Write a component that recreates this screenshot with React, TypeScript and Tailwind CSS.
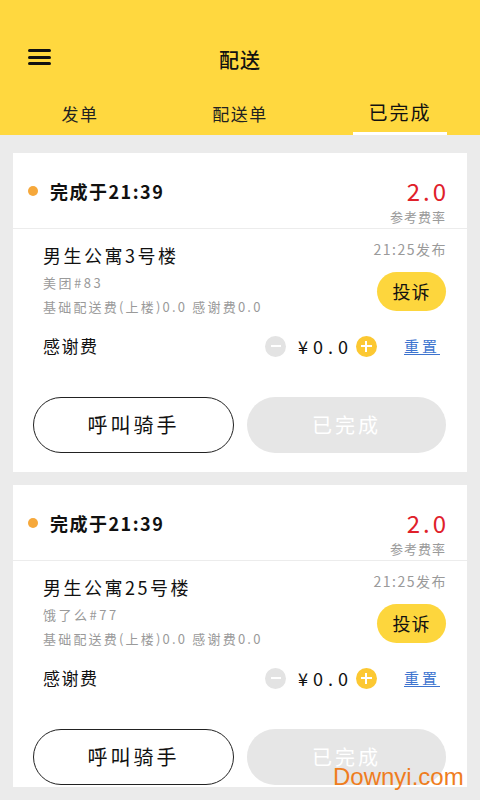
import React from "react";

const cjk = { fontFamily: '"Noto Sans CJK SC", "Noto Sans", sans-serif' };

type Order = { name: string; shop: string };

const orders: Order[] = [
  { name: "男生公寓3号楼", shop: "美团#83" },
  { name: "男生公寓25号楼", shop: "饿了么#77" },
];

const OrderCard: React.FC<{ order: Order }> = ({ order }) => (
  <div className="bg-white mx-[13px] mb-[13px]">
    <div className="h-[76px] pt-[24px] pl-[15px] pr-[21px] flex justify-between items-start border-b border-[#ececec]">
      <div className="flex items-center h-[28px] gap-[12px]">
        <span className="w-[10px] h-[10px] rounded-full bg-[#f6a83b]" />
        <span className="text-[18px] font-bold text-[#111] tracking-[1.5px]">完成于21:39</span>
      </div>
      <div className="flex flex-col items-end">
        <span className="text-[24px] leading-[28px] tracking-[3px] text-[#e0202a] mr-[-3px]">2.0</span>
        <span className="text-[13px] leading-[16px] mt-[4px] text-[#9a9a9a] tracking-[1px]">参考费率</span>
      </div>
    </div>

    <div className="pl-[30px] pr-[21px] flex justify-between">
      <div className="pt-[13px] flex flex-col">
        <span className="text-[18px] leading-[26px] text-[#111] tracking-[2.5px]">{order.name}</span>
        <span className="text-[13px] leading-[20px] mt-[5px] text-[#9a9a9a] tracking-[2.5px]">{order.shop}</span>
        <span className="text-[13px] leading-[20px] mt-[4px] text-[#9a9a9a] tracking-[2.2px] whitespace-nowrap">
          基础配送费(上楼)0.0 感谢费0.0
        </span>
      </div>
      <div className="pt-[10px] flex flex-col items-end">
        <span className="text-[14px] leading-[20px] text-[#9a9a9a] tracking-[1.5px] mr-[-1px]">21:25发布</span>
        <button className="mt-[13px] w-[69px] h-[39px] rounded-full bg-[#fdd63d] text-[18px] text-[#111] tracking-[1px]">
          投诉
        </button>
      </div>
    </div>

    <div className="mt-[17px] pl-[30px] pr-[27px] h-[24px] flex items-center justify-between">
      <span className="text-[17px] text-[#111] tracking-[1.5px]">感谢费</span>
      <div className="flex items-center">
        <span className="w-[21px] h-[21px] rounded-full bg-[#e3e3e3] flex items-center justify-center">
          <span className="w-[10px] h-[2px] bg-white" />
        </span>
        <span className="ml-[12px] text-[18px] text-[#111] tracking-[5px] mr-[-5px]">¥0.0</span>
        <span className="ml-[8px] w-[21px] h-[21px] rounded-full bg-[#fcc832] flex items-center justify-center relative">
          <span className="w-[11px] h-[2px] bg-white" />
          <span className="absolute w-[2px] h-[11px] bg-white" />
        </span>
        <span className="ml-[27px] text-[15px] text-[#3d74cf] underline underline-offset-2 tracking-[3px]">重置</span>
      </div>
    </div>

    <div className="mt-[39px] pl-[20px] pr-[21px] pb-[19px] flex gap-[13px]">
      <button className="flex-1 h-[56px] rounded-full border-[1.5px] border-[#222] text-[20px] text-[#111] tracking-[3px]">
        呼叫骑手
      </button>
      <button className="flex-1 h-[56px] rounded-full bg-[#e6e6e6] text-[20px] text-white tracking-[3px]">
        已完成
      </button>
    </div>
  </div>
);

export default function App() {
  return (
    <div className="w-[480px] h-[800px] bg-[#ebebeb] flex flex-col overflow-hidden relative" style={cjk}>
      <div className="h-[135px] bg-[#ffd83f] flex flex-col shrink-0">
        <div className="mt-[40px] h-[40px] grid grid-cols-[1fr_auto_1fr] items-center px-[28px]">
          <div className="flex flex-col gap-[3.5px] w-[23px] mt-[-6px]">
            <span className="h-[3px] bg-[#111] rounded-sm" />
            <span className="h-[3px] bg-[#111] rounded-sm" />
            <span className="h-[3px] bg-[#111] rounded-sm" />
          </div>
          <span className="text-[20px] font-medium text-[#111] tracking-[1px]">配送</span>
          <span />
        </div>
        <div className="mt-auto grid grid-cols-3 h-[43px]">
          <div className="flex items-center justify-center text-[17px] text-[#222] tracking-[1.5px]">发单</div>
          <div className="flex items-center justify-center text-[17px] text-[#222] tracking-[1.5px]">配送单</div>
          <div className="flex flex-col items-center">
            <div className="flex-1 flex items-center text-[19px] text-[#111] tracking-[2px]">已完成</div>
            <span className="w-[94px] h-[3px] bg-white" />
          </div>
        </div>
      </div>

      <div className="flex-1 pt-[18px] pb-[13px] min-h-0 flex flex-col">
        <div className="flex-1 overflow-hidden">
          {orders.map((o) => (
            <OrderCard key={o.name} order={o} />
          ))}
        </div>
      </div>

      <span
        className="absolute left-[333px] top-[765px] text-[24px] leading-none text-[#ef7d1e]"
        style={{ fontFamily: '"Liberation Sans", Arial, sans-serif' }}
      >
        Downyi.com
      </span>
    </div>
  );
}
